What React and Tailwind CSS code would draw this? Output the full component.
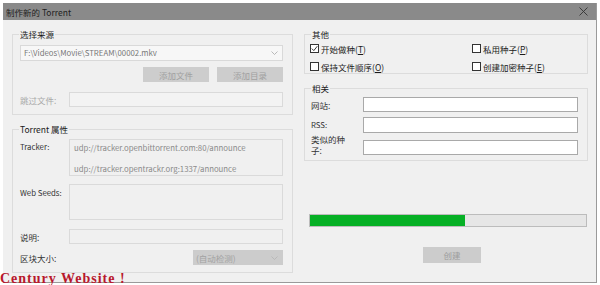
import React from 'react';

const font = { fontFamily: '"Noto Sans CJK SC", "Noto Sans", sans-serif' };

const Chevron = ({ color = '#a8a8a8' }) => <svg width="7" height="4" viewBox="0 0 7 4" className="shrink-0">
    <path d="M0.5 0.5 L3.5 3.5 L6.5 0.5" fill="none" stroke={color} strokeWidth="0.8" />
  </svg>;

const Check = ({ checked, label, hot }) => {
  // label text, hot = underlined access key
  return <div className="flex items-center h-[13px] gap-[2px] text-[#1a1a1a]">
      <span className="w-[9px] h-[9px] border border-[#333] bg-white flex items-center justify-center">
        {checked && <svg width="7" height="7" viewBox="0 0 7 7">
            <path d="M0.8 3.6 L2.8 5.6 L6.3 1.2" fill="none" stroke="#222" strokeWidth="0.9" />
          </svg>}
      </span>
      <span>{label}(<u>{hot}</u>)</span>
    </div>;
};

const Group = ({ title, className = '', children }) => <fieldset className={`border border-[#dcdcdc] pl-[6px] ${className}`}>
    <legend className="px-[1px] leading-[14px] text-[#1a1a1a]">{title}</legend>
    {children}
  </fieldset>;

const Field = ({ label, labelClass = 'text-[#333]', children, align = 'items-center', className = '' }) => <div className={`flex ${align} ${className}`}>
    <span className={`flex-1 ${labelClass}`}>{label}</span>
    {children}
  </div>;

export default function App() {
  return <div className="relative w-[600px] h-[285px] overflow-hidden bg-white text-[8.5px] leading-[12px]" style={font}>
      <div className="ml-[3px] mt-[3px] w-[594px] h-[280px] bg-[#f0f0f0] border-r border-b border-[#9a9a9a] flex flex-col">
        {/* 标题栏 */}
        <div className="h-[17px] bg-[#8a8a8a] flex items-center justify-between pl-[3px] pr-[8px] shrink-0">
          <span className="text-[#1e1e1e] text-[8.5px]">制作新的 Torrent</span>
          <svg width="9" height="9" viewBox="0 0 9 9">
            <path d="M0.5 0.5 L8.5 8.5 M8.5 0.5 L0.5 8.5" stroke="#333" strokeWidth="0.9" />
          </svg>
        </div>

        <div className="flex pl-[9px] pt-[7px] gap-[11px]">
          {/* 左侧 */}
          <div className="w-[281px] flex flex-col">
            <Group title="选择来源" className="pr-[9px] pb-[7px]">
              <div className="mt-[4px] ml-[1px] h-[16px] bg-[#f7f7f7] border border-[#d9d9d9] flex items-center justify-between pl-[3px] pr-[4px] text-[#777] text-[7.8px]">
                <span>F:\Videos\Movie\STREAM\00002.mkv</span>
                <Chevron />
              </div>
              <div className="mt-[6px] flex justify-end gap-[8px]">
                <div className="w-[66px] h-[15px] bg-[#cdcdcd] flex items-center justify-center text-[#a0a0a0]">添加文件</div>
                <div className="w-[66px] h-[15px] bg-[#cdcdcd] flex items-center justify-center text-[#a0a0a0]">添加目录</div>
              </div>
              <Field label="跳过文件:" labelClass="text-[#a8a8a8] pl-[1px]" className="mt-[10px]">
                <div className="w-[214px] h-[15px] bg-[#f3f3f3] border border-[#dadada]" />
              </Field>
            </Group>

            <Group title="Torrent 属性" className="mt-[7px] pr-[9px] pb-[7px]">
              <Field label="Tracker:" align="items-start" className="mt-[3px] text-[7.8px]" labelClass="text-[#333] pl-[1px] pt-[2px]">
                <div className="w-[214px] h-[37px] bg-[#f0f0f0] border border-[#dadada] pl-[4px] pt-[2px] text-[#8a8a8a] flex flex-col gap-[9px]">
                  <span>udp://tracker.openbittorrent.com:80/announce</span>
                  <span>udp://tracker.opentrackr.org:1337/announce</span>
                </div>
              </Field>
              <Field label="Web Seeds:" align="items-start" className="mt-[8px] text-[7.8px]" labelClass="text-[#333] pl-[1px] pt-[3px]">
                <div className="w-[214px] h-[36px] bg-[#f0f0f0] border border-[#dadada]" />
              </Field>
              <Field label="说明:" className="mt-[9px]" labelClass="text-[#333] pl-[1px]">
                <div className="w-[214px] h-[15px] bg-[#f0f0f0] border border-[#dadada]" />
              </Field>
              <Field label="区块大小:" className="mt-[6px]" labelClass="text-[#333] pl-[1px]">
                <div className="w-[90px] h-[15px] bg-[#cccccc] flex items-center justify-between pl-[3px] pr-[5px] text-[#a2a2a2]">
                  <span>(自动检测)</span>
                  <Chevron color="#b4b4b4" />
                </div>
              </Field>
            </Group>
          </div>

          {/* 右侧 */}
          <div className="w-[284px] flex flex-col">
            <Group title="其他" className="pr-[9px] pb-[0px]">
              <div className="grid grid-cols-[162px_1fr] gap-y-[5px] mt-[1px] -ml-[1px]">
                <Check checked label="开始做种" hot="T" />
                <Check label="私用种子" hot="P" />
                <Check label="保持文件顺序" hot="O" />
                <Check label="创建加密种子" hot="E" />
              </div>
            </Group>

            <Group title="相关" className="mt-[7px] pr-[9px] pb-[4px]">
              <Field label="网站:" className="mt-[2px]" labelClass="text-[#333]">
                <div className="w-[215px] h-[15px] bg-white border border-[#a9a9a9]" />
              </Field>
              <Field label="RSS:" className="mt-[5px]" labelClass="text-[#333] text-[7.8px]">
                <div className="w-[215px] h-[16px] bg-white border border-[#a9a9a9]" />
              </Field>
              <div className="flex items-end mt-[1px]">
                <span className="w-[38px] text-[#333] leading-[11px]">类似的种子:</span>
                <div className="ml-auto w-[215px] h-[15px] mb-[1px] bg-white border border-[#a9a9a9]" />
              </div>
            </Group>

            <div className="mt-[53px] ml-[5px] w-[278px] h-[13px] bg-[#e6e6e6] border border-[#bcbcbc] flex">
              <div className="h-full bg-[#06b025]" style={{ width: `${155 / 276 * 100}%` }} />
            </div>

            <div className="mt-[20px] ml-[119px] w-[58px] h-[16px] bg-[#cccccc] flex items-center justify-center text-[#9c9c9c]">创建</div>
          </div>
        </div>
      </div>

      {/* 背景网页上的红字 */}
      <div className="absolute left-0 top-[273px] text-[14px] leading-[12px] tracking-[1px] font-bold text-[#b8182c] whitespace-nowrap" style={{ fontFamily: '"Liberation Serif", serif' }}>
        Century Website !
      </div>
    </div>;
}
